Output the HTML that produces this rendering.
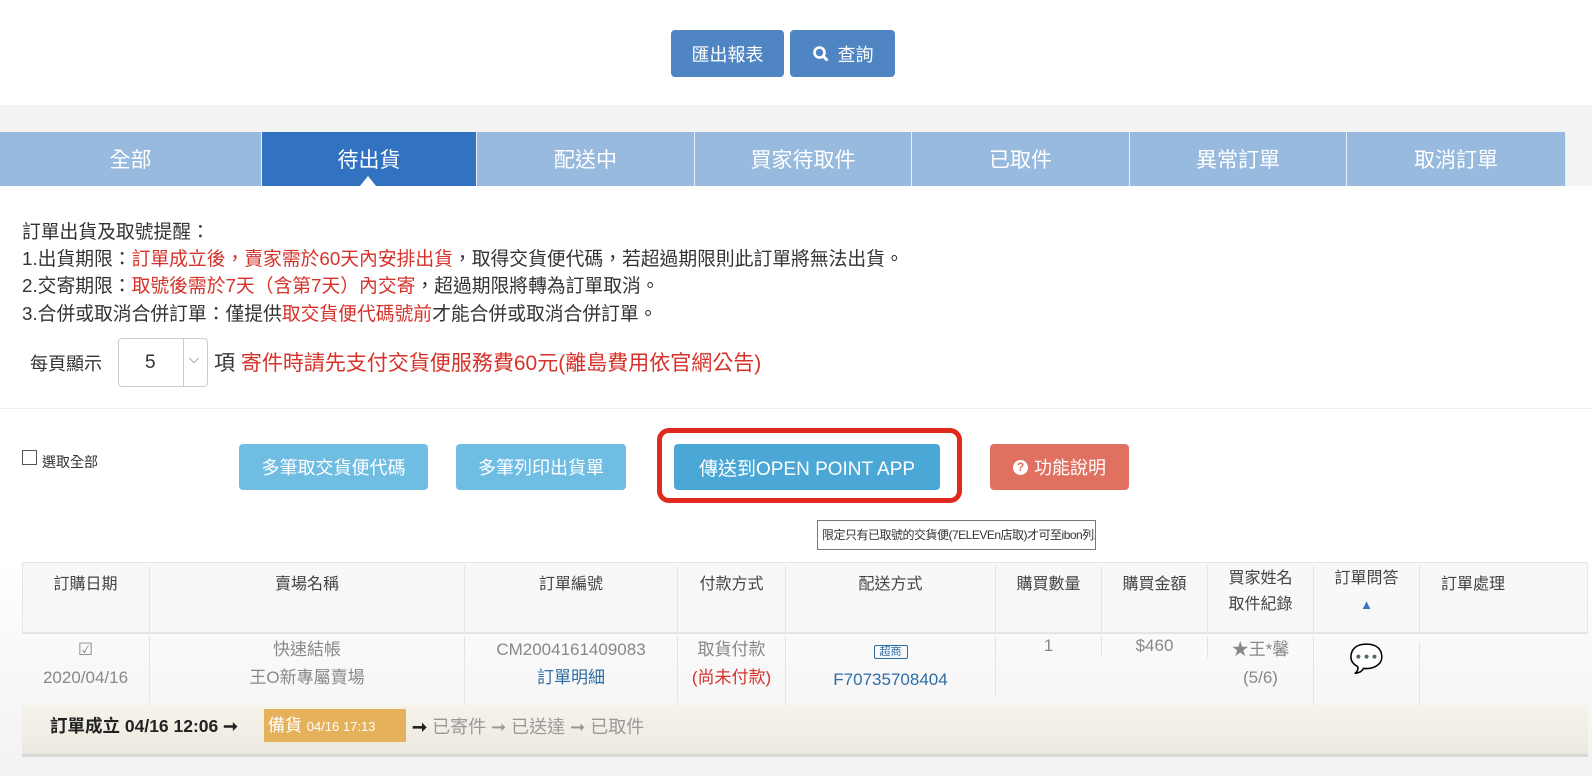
<!DOCTYPE html>
<html><head><meta charset="utf-8"><style>
body{margin:0;width:1592px;height:776px;overflow:hidden;background:#f3f3f3;font-family:"Liberation Sans","Noto Sans CJK TC",sans-serif;position:relative;color:#333}
.a{position:absolute}
.btn{position:absolute;color:#fff;font-size:18px;display:flex;align-items:center;justify-content:center;border-radius:4px}
.tab{position:absolute;top:132px;height:54px;background:#98bade;color:#fff;font-size:21px;display:flex;align-items:center;justify-content:center;border-right:1px solid #e8eef6;box-sizing:border-box}
.r{color:#d6322a}
.txt{position:absolute;left:22px;font-size:18.8px;color:#333;white-space:nowrap}
.cell{position:absolute;box-sizing:border-box;text-align:center;font-size:16px;color:#444;border-right:1px solid #e4e4e4}
.g{color:#888}
.b{color:#2e6da4}
</style></head><body>
<div class="a" style="left:0;top:0;width:1592px;height:105px;background:#fff"></div>
<div class="btn" style="left:671px;top:30px;width:113px;height:47px;background:#4f85c3">匯出報表</div>
<div class="btn" style="left:790px;top:30px;width:105px;height:47px;background:#4f85c3"><svg width="18" height="18" viewBox="0 0 18 18" style="margin-right:8px"><circle cx="7.5" cy="7.5" r="5" fill="none" stroke="#fff" stroke-width="2.6"/><path d="M11 11l4.5 4.5" stroke="#fff" stroke-width="2.8"/></svg>查詢</div>
<div class="a" style="left:0;top:186px;width:1592px;height:222px;background:#fff"></div>
<div class="a" style="left:0;top:408px;width:1592px;height:368px;background:linear-gradient(#fff 0,#fff 150px,#f2f2f2 368px)"></div>
<div class="tab" style="left:0;width:262px">全部</div>
<div class="tab" style="left:262px;width:215px;background:#3173c1">待出貨</div>
<div class="a" style="left:360px;top:176px;width:0;height:0;border-left:8px solid transparent;border-right:8px solid transparent;border-bottom:10px solid #fff"></div>
<div class="tab" style="left:477px;width:218px">配送中</div>
<div class="tab" style="left:695px;width:217px">買家待取件</div>
<div class="tab" style="left:912px;width:218px">已取件</div>
<div class="tab" style="left:1130px;width:217px">異常訂單</div>
<div class="tab" style="left:1347px;width:219px">取消訂單</div>
<div class="txt" style="top:217px">訂單出貨及取號提醒：</div>
<div class="txt" style="top:244px">1.出貨期限：<span class="r">訂單成立後，賣家需於60天內安排出貨</span>，取得交貨便代碼，若超過期限則此訂單將無法出貨。</div>
<div class="txt" style="top:271px">2.交寄期限：<span class="r">取號後需於7天（含第7天）內交寄</span>，超過期限將轉為訂單取消。</div>
<div class="txt" style="top:299px">3.合併或取消合併訂單：僅提供<span class="r">取交貨便代碼號前</span>才能合併或取消合併訂單。</div>
<div class="txt" style="left:30px;top:350px;font-size:18px">每頁顯示</div>
<div class="a" style="left:118px;top:338px;width:90px;height:49px;border:1px solid #ccc;border-radius:4px;box-sizing:border-box;background:#fff"><span class="a" style="left:26px;top:13px;font-size:19px">5</span><div class="a" style="left:64px;top:0;width:1px;height:47px;background:#ccc"></div><span class="a" style="left:70px;top:12px;font-size:13px;color:#666">⌵</span></div>
<div class="txt" style="left:214px;top:347px;font-size:21px">項 <span class="r">寄件時請先支付交貨便服務費60元(離島費用依官網公告)</span></div>
<div class="a" style="left:0;top:408px;width:1592px;height:1px;background:#eee"></div>
<div class="a" style="left:22px;top:450px;width:15px;height:15px;border:1px solid #555;box-sizing:border-box"></div>
<div class="a" style="left:42px;top:452px;font-size:14px">選取全部</div>
<div class="btn" style="left:239px;top:444px;width:189px;height:46px;background:#6fbde3">多筆取交貨便代碼</div>
<div class="btn" style="left:456px;top:444px;width:170px;height:46px;background:#6fbde3">多筆列印出貨單</div>
<div class="a" style="left:657px;top:428px;width:305px;height:75px;border:5px solid #e02a1d;border-radius:12px;box-sizing:border-box"></div>
<div class="btn" style="left:674px;top:444px;width:266px;height:46px;background:#4aa7d6;font-size:19px">傳送到OPEN POINT APP</div>
<div class="btn" style="left:990px;top:444px;width:139px;height:46px;background:#e0705f"><span style="display:inline-block;width:15px;height:15px;border-radius:50%;background:#fff;color:#e0705f;font-size:12px;line-height:15px;text-align:center;margin-right:6px;font-weight:bold">?</span>功能說明</div>
<div class="a" style="left:817px;top:520px;width:279px;height:30px;border:1px solid #777;background:#fff;font-size:12px;line-height:28px;padding-left:4px;box-sizing:border-box;white-space:nowrap;letter-spacing:-0.5px;overflow:hidden">限定只有已取號的交貨便(7ELEVEn店取)才可至ibon列印</div>
<div class="a" style="left:22px;top:562px;width:1566px;height:71px;background:#f8f8f8;border:1px solid #e6e6e6;box-sizing:border-box"></div>
<div class="cell" style="left:22px;top:566px;width:128px;height:67px;padding-top:4px">訂購日期</div>
<div class="cell" style="left:150px;top:566px;width:315px;height:67px;padding-top:4px">賣場名稱</div>
<div class="cell" style="left:465px;top:566px;width:213px;height:67px;padding-top:4px">訂單編號</div>
<div class="cell" style="left:678px;top:566px;width:108px;height:67px;padding-top:4px">付款方式</div>
<div class="cell" style="left:786px;top:566px;width:210px;height:67px;padding-top:4px">配送方式</div>
<div class="cell" style="left:996px;top:566px;width:106px;height:67px;padding-top:4px">購買數量</div>
<div class="cell" style="left:1102px;top:566px;width:106px;height:67px;padding-top:4px">購買金額</div>
<div class="cell" style="left:1208px;top:566px;width:106px;height:67px;line-height:26px">買家姓名<br>取件紀錄</div>
<div class="cell" style="left:1314px;top:566px;width:106px;height:67px;line-height:26px">訂單問答<br><span style="color:#3b73c4;font-size:13px">▲</span></div>
<div class="cell" style="left:1420px;top:566px;width:106px;height:67px;border:none;padding-top:4px">訂單處理</div>
<div class="a" style="left:22px;top:633px;width:1566px;height:1px;background:#e4e4e4"></div>
<div class="cell g" style="left:22px;top:636px;width:128px;height:69px;line-height:28px;font-size:17px">☑<br>2020/04/16</div>
<div class="cell g" style="left:150px;top:636px;width:315px;height:69px;line-height:28px;font-size:17px">快速結帳<br>王O新專屬賣場</div>
<div class="cell g" style="left:465px;top:636px;width:213px;height:69px;line-height:28px;font-size:17px">CM2004161409083<br><span class="b">訂單明細</span></div>
<div class="cell g" style="left:678px;top:636px;width:108px;height:69px;line-height:28px;font-size:17px">取貨付款<br><span class="r">(尚未付款)</span></div>
<div class="cell" style="left:786px;top:636px;width:210px;height:60px;line-height:28px;font-size:17px"><span style="border:1px solid #2e6da4;color:#2e6da4;font-size:11px;padding:0 5px;border-radius:2px">超商</span><br><span class="b">F70735708404</span></div>
<div class="cell g" style="left:996px;top:636px;width:106px;height:22px;font-size:17px">1</div>
<div class="cell g" style="left:1102px;top:636px;width:106px;height:22px;font-size:17px">$460</div>
<div class="cell g" style="left:1208px;top:636px;width:106px;height:69px;line-height:28px;font-size:17px">★王*馨<br>(5/6)</div>
<div class="cell" style="left:1314px;top:642px;width:106px;height:63px;font-size:28px;color:#222">💬</div>
<div class="a" style="left:22px;top:705px;width:1566px;height:52px;background:linear-gradient(#f6f3ea,#ece9e1);border-bottom:3px solid #d8d8d8;box-sizing:border-box"></div>
<div class="a" style="left:50px;top:713px;font-size:17.5px;font-weight:bold;color:#222;white-space:nowrap">訂單成立 04/16 12:06 ➞</div>
<div class="a" style="left:264px;top:709px;width:142px;height:33px;background:#e5b15a;color:#fff;font-size:17px;line-height:33px;padding-left:4px;box-sizing:border-box;white-space:nowrap">備貨 <span style="font-size:13px">04/16 17:13</span></div>
<div class="a" style="left:412px;top:713px;font-size:18px;color:#999;white-space:nowrap"><b style="color:#222">➞</b> 已寄件 ➞ 已送達 ➞ 已取件</div>
</body></html>
